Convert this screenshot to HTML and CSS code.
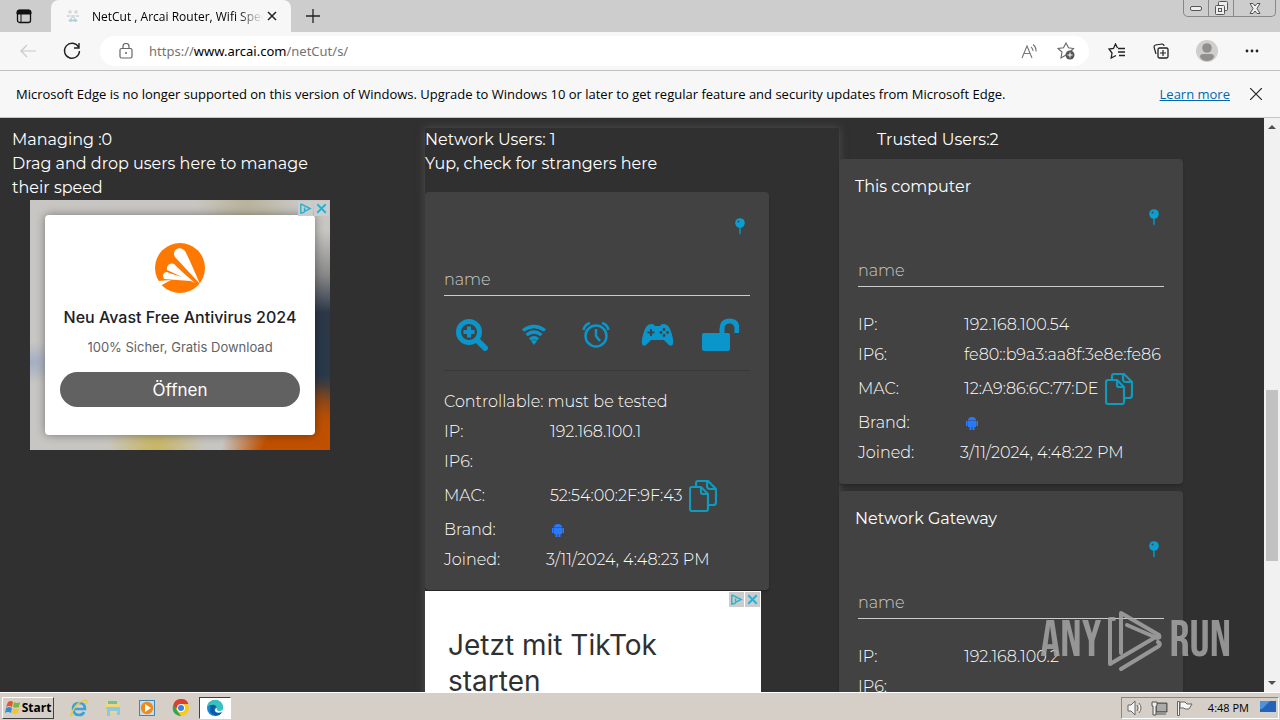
FILE: index.html
```html
<!DOCTYPE html>
<html lang="en">
<head>
<meta charset="utf-8">
<title>NetCut , Arcai Router, Wifi Speed</title>
<link rel="stylesheet" href="styles.css">
</head>
<body>
<svg class="sprite" aria-hidden="true">
  <symbol id="pin" viewBox="0 0 12 18"><path d="M5 9h2v6l-1 2-1-2z" fill="#1482a3"/><circle cx="6" cy="5" r="4.800" fill="#0a9fd0"/><circle cx="4.500" cy="3.500" r="1" fill="#47454c"/></symbol>
  <symbol id="copy" viewBox="0 0 28 32"><g fill="none" stroke="#0f9bbd" stroke-width="2.200" stroke-linejoin="round"><path d="M3 7h9l7 7v15q0 2-2 2H3q-2 0-2-2V9q0-2 2-2zM12 7v5q0 2 2 2h5"/><path d="M7 6V3q0-2 2-2h10l8 8v13q0 3-3 3h-4M18 1v5q0 3 3 3h6"/></g></symbol>
  <symbol id="android" viewBox="0 0 12 14"><path d="M2 4.500Q2 1 6 1t4 3.500zM2 5h8v6H8.500v3h-2v-3h-1v3h-2v-3H2z" fill="#2979ff"/><path d="M0 5h1.600v5H0zM10.400 5H12v5h-1.600z" fill="#2979ff"/></symbol>
  <symbol id="adinfo" viewBox="0 0 16 16"><path d="M3 3v10l4-1M3 3l10 5-6 3V7" fill="none" stroke="#2bb0cf" stroke-width="1.500"/></symbol>
  <symbol id="adclose" viewBox="0 0 16 16"><path d="M3.500 3.500l9 9m0-9l-9 9" fill="none" stroke="#2bb0cf" stroke-width="2"/></symbol>
</svg>

<header class="tabstrip">
  <button class="tabmenu" aria-label="Tab actions"><svg width="16" height="16" viewBox="0 0 16 16"><rect x="1.500" y="2.500" width="13" height="12" rx="2" fill="none" stroke="#111" stroke-width="1.300"/><path d="M1 6V4q0-2 2-2h10q2 0 2 2v2zM5 6v8" stroke="#111" fill="#111"/></svg></button>
  <div class="tab">
    <svg width="14" height="14" viewBox="0 0 14 14"><circle cx="4" cy="3" r="1.800" fill="#d3d9dd"/><circle cx="10" cy="3" r="1.800" fill="#d3d9dd"/><path d="M1 6h3v2H1zM10 6h3v2h-3zM5 6h4v3H5z" fill="#d3d9dd"/><path d="M2 12l3-3 2 2 2-2 3 3-3 1-2-1-2 1z" fill="#b5cedb"/></svg>
    <span class="tab-title">NetCut , Arcai Router, Wifi Spee</span>
    <button aria-label="Close tab"><svg width="10" height="10" viewBox="0 0 10 10"><path d="M1 1l8 8m0-8L1 9" stroke="#222" stroke-width="1.500"/></svg></button>
  </div>
  <button class="newtab" aria-label="New tab"><svg width="14" height="14" viewBox="0 0 14 14"><path d="M7 0v14M0 7h14" stroke="#222" stroke-width="1.300"/></svg></button>
  <div class="winctl">
    <button aria-label="Minimize"><svg width="12" height="6" viewBox="0 0 12 6"><rect x=".5" y="1.500" width="11" height="4" rx="1.500" fill="#eee" stroke="#555"/></svg></button>
    <button aria-label="Restore"><svg width="14" height="14" viewBox="0 0 14 14"><g fill="#eee" stroke="#555"><rect x="4.500" y=".5" width="9" height="9" rx="1"/><rect x="1.500" y="4.500" width="9" height="9" rx="1"/><rect x="4.500" y="7.500" width="3" height="3"/></g></svg></button>
    <button class="winclose" aria-label="Close"><svg width="12" height="11" viewBox="0 0 12 11"><path d="M1 .5h3l2 2.500 2-2.500h3L8 5.500l3 5H8L6 8l-2 2.500H1l3-5z" fill="#eee" stroke="#555"/></svg></button>
  </div>
</header>

<nav class="toolbar">
  <button class="back" aria-label="Back"><svg width="16" height="14" viewBox="0 0 16 14"><path d="M7 1L1 7l6 6M1 7h15" fill="none" stroke="#c8c8c8" stroke-width="1.200"/></svg></button>
  <button class="reload" aria-label="Refresh"><svg width="18" height="18" viewBox="0 0 18 18"><path d="M15.500 5A7.500 7.500 0 1 0 16.500 9M16 1v5h-5" fill="none" stroke="#222" stroke-width="1.400"/></svg></button>
  <div class="address">
    <svg width="14" height="16" viewBox="0 0 14 16"><rect x="1" y="5.500" width="12" height="9.500" rx="1.500" fill="none" stroke="#666" stroke-width="1.200"/><path d="M4 5V3.500a3 3 0 0 1 6 0V5" fill="none" stroke="#666" stroke-width="1.200"/><circle cx="7" cy="10" r="1" fill="#666"/></svg>
    <div class="url">https://<b>www.arcai.com</b>/netCut/s/</div>
    <button aria-label="Read aloud"><svg width="16" height="16" viewBox="0 0 16 16"><path d="M1 15L6 3l5 12M3 10.500h6.500M10 4q2 1.500 2 4M12 1.500q3.500 2.500 3 7" fill="none" stroke="#777" stroke-width="1.100"/></svg></button>
    <button class="fav" aria-label="Add to favorites"><svg width="18" height="18" viewBox="0 0 18 18"><path d="M9 13l-5 3 1-6L1 6.500l5.500-.8L9 1l2.500 4.700 5 .8-3 3" fill="none" stroke="#666" stroke-width="1.100"/><circle cx="13" cy="13" r="4.500" fill="#555"/><path d="M13 10.500v5M10.500 13h5" stroke="#fff"/></svg></button>
  </div>
  <div class="actions">
    <button aria-label="Favorites"><svg width="18" height="16" viewBox="0 0 18 16"><path d="M9.500 5L7.500 1l-2 4.500L1 6l3 4-.8 5L8 12.500M10 5.500h7M10 9h7M11 12.500h6" fill="none" stroke="#222" stroke-width="1.300"/></svg></button>
    <button aria-label="Collections"><svg width="16" height="16" viewBox="0 0 16 16"><rect x="5" y="5" width="10" height="10" rx="1.500" fill="none" stroke="#222" stroke-width="1.300"/><path d="M10 7v6M7 10h6M3 11L1 4q0-1.500 1.500-2L9 1q2 0 2 2" fill="none" stroke="#222" stroke-width="1.200"/></svg></button>
    <button aria-label="Profile"><svg width="22" height="22" viewBox="0 0 22 22"><circle cx="11" cy="11" r="11" fill="#d0cecc"/><circle cx="11" cy="8" r="4.800" fill="#918f8d"/><path d="M4 17q0-3 3-3h8q3 0 3 3-2 4-7 4t-7-4z" fill="#918f8d"/></svg></button>
    <button aria-label="More"><svg width="14" height="4" viewBox="0 0 14 4"><g fill="#222"><circle cx="2" cy="2" r="1.400"/><circle cx="7" cy="2" r="1.400"/><circle cx="12" cy="2" r="1.400"/></g></svg></button>
  </div>
</nav>

<div class="infobar">
  <span>Microsoft Edge is no longer supported on this version of Windows. Upgrade to Windows 10 or later to get regular feature and security updates from Microsoft Edge.</span>
  <a href="#">Learn more</a>
  <button aria-label="Dismiss"><svg width="12" height="12" viewBox="0 0 12 12"><path d="M0 0l12 12M12 0L0 12" stroke="#222" stroke-width="1.200"/></svg></button>
</div>

<div class="view">
  <main class="page">
    <section class="col">
      <p class="head managing">Managing :0<br>Drag and drop users here to manage their speed</p>
      <div class="ad">
        <div class="adtags"><svg width="15" height="15"><use href="#adinfo"/></svg><svg width="15" height="15"><use href="#adclose"/></svg></div>
        <div class="adbox">
          <svg width="50" height="50" viewBox="0 0 50 50"><circle cx="25" cy="25" r="25" fill="#ff7800"/><path d="M20 14C16 7 25 2 30 8q2 3 15 33zM12 27c-1-6 6-9 9-4q5 5 19 17zM9 36c-3-5 2-9 5-6q12 3 22 8-15-1-27-2zM3 38l13-1-11 6z" fill="#fff"/></svg>
          <h3>Neu Avast Free Antivirus 2024</h3>
          <p>100% Sicher, Gratis Download</p>
          <button>Öffnen</button>
        </div>
      </div>
    </section>

    <section class="col network">
      <p class="head">Network Users: 1<br>Yup, check for strangers here</p>
      <article class="card user">
        <div class="pinrow"><svg width="12" height="18"><use href="#pin"/></svg></div>
        <input type="text" placeholder="name" aria-label="User name">
        <div class="tools">
          <button aria-label="Scan"><svg width="34" height="34" viewBox="0 0 34 34"><circle cx="14" cy="14" r="10.500" fill="none" stroke="#0a95cb" stroke-width="5"/><path d="M14 8.500v11M8.500 14h11" stroke="#0a95cb" stroke-width="4"/><path d="M22 22l8 8" stroke="#0a95cb" stroke-width="6" stroke-linecap="round"/></svg></button>
          <button aria-label="Wifi"><svg width="26" height="22" viewBox="0 0 26 22"><g fill="none" stroke="#0a95cb" stroke-width="3.400"><path d="M2 6.500q11-8 22 0"/><path d="M5.500 11q7.500-6 15 0"/><path d="M9 15.500q4-3.500 8 0"/></g><path d="M10 17q3-2 6 0l-3 4z" fill="#0a95cb"/></svg></button>
          <button aria-label="Schedule"><svg width="28" height="28" viewBox="0 0 28 28"><g fill="none" stroke="#0a95cb" stroke-width="2.500"><circle cx="14" cy="15" r="10.500"/><path d="M14 8v7l4 5M1.500 9Q3 3 8 2M26.500 9Q25 3 20 2"/></g></svg></button>
          <button aria-label="Game mode"><svg width="33" height="24" viewBox="0 0 33 24"><path d="M4 6q2-5 7-5 2 0 3 2h5q1-2 3-2 5 0 7 5 4 10 3 15-1 3-4 1l-5-5H10l-5 5q-3 2-4-1Q0 16 4 6z" fill="#0a95cb"/><path d="M10 6v7M6.500 9.500h7" stroke="#424242" stroke-width="2"/><g fill="#424242"><circle cx="23" cy="6.500" r="1.400"/><circle cx="20" cy="9.500" r="1.400"/><circle cx="26.500" cy="9.500" r="1.400"/><circle cx="23" cy="12.500" r="1.400"/></g></svg></button>
          <button class="lock" aria-label="Unlock"><svg width="37" height="34" viewBox="0 0 37 34"><rect y="15" width="28" height="18" rx="2" fill="#0a95cb"/><path d="M20 16v-5q0-8 7.500-8T35 11v4" fill="none" stroke="#0a95cb" stroke-width="5"/></svg></button>
        </div>
        <hr>
        <div class="row">Controllable: must be tested</div>
        <div class="row"><span>IP:</span>192.168.100.1</div>
        <div class="row"><span>IP6:</span></div>
        <div class="row mac"><span>MAC:</span>52:54:00:2F:9F:43<button aria-label="Copy"><svg width="28" height="32"><use href="#copy"/></svg></button></div>
        <div class="row brand"><span>Brand:</span><svg width="12" height="14"><use href="#android"/></svg></div>
        <div class="row joined"><span>Joined:</span>3/11/2024, 4:48:23 PM</div>
      </article>
      <div class="tiktok">
        <div class="adtags"><svg width="15" height="15"><use href="#adinfo"/></svg><svg width="15" height="15"><use href="#adclose"/></svg></div>
        <h2>Jetzt mit TikTok starten</h2>
      </div>
    </section>

    <section class="col trusted">
      <p class="head">Trusted Users:2</p>
      <article class="card">
        <h4>This computer</h4>
        <div class="pinrow"><svg width="12" height="18"><use href="#pin"/></svg></div>
        <input type="text" placeholder="name" aria-label="Computer name">
        <div class="row"><span>IP:</span>192.168.100.54</div>
        <div class="row"><span>IP6:</span>fe80::b9a3:aa8f:3e8e:fe86</div>
        <div class="row mac"><span>MAC:</span>12:A9:86:6C:77:DE<button aria-label="Copy"><svg width="28" height="32"><use href="#copy"/></svg></button></div>
        <div class="row brand"><span>Brand:</span><svg width="12" height="14"><use href="#android"/></svg></div>
        <div class="row joined"><span>Joined:</span>3/11/2024, 4:48:22 PM</div>
      </article>
      <article class="card">
        <h4>Network Gateway</h4>
        <div class="pinrow"><svg width="12" height="18"><use href="#pin"/></svg></div>
        <input type="text" placeholder="name" aria-label="Gateway name">
        <div class="row"><span>IP:</span>192.168.100.2</div>
        <div class="row"><span>IP6:</span></div>
      </article>
    </section>
  </main>
  <div class="scrollbar">
    <svg width="16" height="17" viewBox="0 0 16 17"><path d="M4 11l4-4 4 4z" fill="#505050"/></svg>
    <div class="track"><div class="thumb"></div></div>
    <svg width="16" height="17" viewBox="0 0 16 17"><path d="M4 6l4 4 4-4z" fill="#505050"/></svg>
  </div>
  <div class="watermark">
    <span>ANY</span>
    <svg width="56" height="62" viewBox="0 0 56 62"><g fill="none" stroke="#a5a5a5" stroke-width="4" stroke-linejoin="round" stroke-linecap="round"><path d="M14 43V3l38 22q2 3-2 3L20 15"/><path d="M7 9H3v45l44-26"/><path d="M14 59l38-23q2-3-1-4"/></g></svg>
    <span>RUN</span>
  </div>
</div>

<footer class="taskbar">
  <button class="start"><svg width="16" height="15" viewBox="0 0 16 15"><path d="M3 2q3-2 5 0L7 7Q4 5 1 7z" fill="#e2572b"/><path d="M9 2q3 2 6 0l-1 5q-4 1-6 0z" fill="#75b843"/><path d="M1 8q3-2 6 0l-1 5q-3-2-6 0z" fill="#338bd3"/><path d="M8 8q3 2 6 0l-1 5q-3 2-6 0z" fill="#f7c42f"/></svg>Start</button>
  <button aria-label="Internet Explorer"><svg width="18" height="18" viewBox="0 0 18 18"><path d="M4 10h11q0-6-6-6t-6 6q1 6 6 6 4 0 5-3" fill="none" stroke="#35a5df" stroke-width="2.600"/><path d="M3 15q-4 4-1-2Q8 2 15 1q3 0 1 4" fill="none" stroke="#eec648" stroke-width="1.600"/></svg></button>
  <button aria-label="Explorer"><svg width="18" height="18" viewBox="0 0 18 18"><path d="M2 3h5l1 2h8v9H2z" fill="#eed77d"/><path d="M4 2h9v3H4z" fill="#77c18b"/><path d="M2 8h14v8h-3v-4H6v5H3v-5z" fill="#8bc7e8"/></svg></button>
  <button aria-label="Media Player"><svg width="18" height="18" viewBox="0 0 18 18"><rect x="1.500" y="1.500" width="15" height="15" fill="#c2def1" stroke="#4285b9"/><circle cx="9" cy="9" r="6.200" fill="#f18919"/><path d="M7 5l6 4-6 4z" fill="#fff"/></svg></button>
  <button aria-label="Chrome"><svg width="18" height="18" viewBox="0 0 18 18"><circle cx="9" cy="9" r="8" fill="#f9c91c"/><path d="M9 9H1.500l-.4-2A8 8 0 0 1 16.500 5H9z" fill="#dc4032"/><path d="M1.500 5.500L6 13l3 4A8 8 0 0 1 1.500 5.500z" fill="#35a355"/><circle cx="9" cy="9" r="4" fill="#fff"/><circle cx="9" cy="9" r="3" fill="#3d7de5"/></svg></button>
  <button class="active" aria-label="Edge"><svg width="18" height="18" viewBox="0 0 18 18"><circle cx="9" cy="9" r="8" fill="#1688d3"/><path d="M1 8Q3 1 9 1q7 0 8 7 0 4-5 4-2 0-1-2 0-4-4-4-4 0-6 2z" fill="#37c3bd"/><path d="M3 7q6-3 7 1-3 1-1 5 3 2 7 0-3 5-8 3-6-3-3-8z" fill="#0c59a4"/><path d="M11 9q-1 3 2 3 3 0 4-2l-1 3q-5 2-7-1 0-3 2-3z" fill="#fff"/></svg></button>
  <div class="tray">
    <svg width="16" height="16" viewBox="0 0 16 16"><path d="M1 5h3l4-4v14l-4-4H1zM10 5q2 3 0 6M12 3q4 5 0 10" fill="#f5f5f5" stroke="#666"/></svg>
    <svg width="17" height="16" viewBox="0 0 17 16"><path d="M5 3h11v9H5zM3 14h12" fill="#777" stroke="#555"/><path d="M6 4h9v7H6z" fill="#aaa"/><path d="M1 2h5v4H5v9H2V6H1z" fill="#eee" stroke="#555"/></svg>
    <svg width="17" height="16" viewBox="0 0 17 16"><path d="M1.500 1.500h2v14h-2zM4 2h5l2 2h5l-3 5H9L8 8H4z" fill="#f5f5f5" stroke="#666"/></svg>
    <time>4:48 PM</time>
    <svg width="16" height="13" viewBox="0 0 16 13"><rect width="16" height="11" fill="#2463b7"/><path d="M0 0h10L2 8H0z" fill="#4e91dc"/><path d="M5 11h6v2H5z" fill="#bcd5ee"/></svg>
  </div>
</footer>
</body>
</html>
```

FILE: styles.css
```css
* { box-sizing: border-box; }
body {
  margin: 0;
  height: 100vh;
  display: flex;
  flex-direction: column;
  overflow: hidden;
  font-family: "Open Sans", "Noto Sans", sans-serif;
  font-size: 12px;
  color: #000;
  background: #303030;
}
button { border: 0; padding: 0; background: none; display: flex; align-items: center; justify-content: center; font: inherit; color: inherit; flex: none; }
svg { flex: none; display: block; }
p, h2, h3, h4 { margin: 0; font-weight: 400; }
.sprite { position: absolute; width: 0; height: 0; }

.tabstrip { display: flex; height: 32px; background: #cdcdcd; flex: none; }
.tabmenu { width: 48px; }
.tab { width: 240px; margin-left: 3px; padding: 0 14px 0 15px; display: flex; align-items: center; background: #f7f7f7; border-radius: 8px 8px 0 0; }
.tab-title { flex: 1; margin: 0 4px 0 12px; overflow: hidden; white-space: nowrap; mask-image: linear-gradient(90deg, #000 85%, transparent); }
.newtab { width: 44px; }
.winctl { margin-left: auto; margin-right: 4px; height: 17px; display: flex; border: 1px solid #888; border-top: 0; border-radius: 0 0 5px 5px; }
.winctl button { width: 25px; border-right: 1px solid #888; }
.winctl .winclose { width: 41px; border: 0; }

.toolbar { display: flex; align-items: center; height: 39px; flex: none; background: #f7f7f7; border-bottom: 1px solid #c0c0c0; }
.back { width: 56px; }
.reload { width: 32px; }
.address { flex: 1; height: 30px; margin-left: 12px; padding: 0 14px 0 19px; display: flex; align-items: center; background: #fff; border-radius: 15px; }
.url { flex: 1; margin-left: 16px; font-family: "Noto Sans", sans-serif; font-size: 13px; color: #737373; }
.url b { font-weight: 400; color: #000; }
.fav { margin-left: 20px; }
.actions { display: flex; align-items: center; gap: 27px; margin: 0 21px 0 19px; }

.infobar { display: flex; align-items: center; height: 47px; flex: none; padding: 0 18px 0 16px; background: #f7f7f7; border-bottom: 1px solid #c4c4c4; white-space: nowrap; font-size: 13px; }
.infobar a { margin-left: auto; margin-right: 20px; color: #0067b0; }

.view { position: relative; flex: 1; min-height: 0; display: flex; overflow: hidden; }
.page { flex: 1; display: grid; grid-template-columns: repeat(3, 1fr); padding: 10px 11px 0; color: #fff; font-family: Montserrat, Inter, sans-serif; font-size: 16px; font-weight: 300; line-height: 24px; overflow: hidden; }
.network { box-shadow: 0 0 8px #505050; }
.managing { max-width: 320px; padding-left: 1px; }
.card { width: 344px; padding: 0 19px 15px; background: #424242; border-radius: 4px; box-shadow: 0 2px 2px #2228; }
.trusted .card { margin-bottom: 7px; padding-bottom: 16px; }
.trusted .head { padding: 0 38px 7px; }
.user { margin-top: 16px; padding-top: 26px; }
.card h4 { margin: 0 -3px; padding: 16px 0 0; }
.pinrow { display: flex; justify-content: flex-end; height: 40px; padding-right: 4px; }
.trusted .pinrow { height: 50px; padding-top: 10px; }
.card input { width: 100%; height: 38px; padding: 5px 0 0; border: 0; border-bottom: 1px solid #ccc; background: none; color: #fff; font: inherit; outline: 0; display: block; }
.card input::placeholder { color: #cacaca; opacity: 1; }
.trusted .card input { margin-bottom: 23px; }
.tools { display: flex; align-items: center; justify-content: space-between; height: 74px; padding: 4px 11px 0; }
.tools button { width: 34px; }
.tools .lock { width: 37px; }
.card hr { margin: 0 0 16px; border: 0; border-top: 1px solid #383838; }
.row { display: flex; align-items: center; height: 30px; white-space: nowrap; }
.row span { width: 106px; flex: none; }
.mac { height: 38px; }
.mac button { margin-left: 7px; }
.brand svg { margin-left: 2px; }
.joined span { width: 102px; }

.ad { position: relative; width: 300px; margin-left: 19px; padding: 15px; background:
  radial-gradient(circle at 90% 105%, #c05000 0 40px, transparent 80px),
  radial-gradient(ellipse at 42% 102%, #c9b45c 0, transparent 50px),
  radial-gradient(ellipse at 0 65%, #a3aec4 0, transparent 40px),
  radial-gradient(ellipse at 72% 0, #b8b298 0, transparent 50px),
  linear-gradient(#c8c6c2 12%, #888 30%, #2c3848 45%, #28394a 70%, #b44c04 90%) right / 15px 100% no-repeat,
  #c8c6c2; }
.adtags { position: absolute; top: 1px; right: 1px; display: flex; gap: 1px; }
.adtags svg { background: #ccc; }
.adbox { height: 220px; padding: 28px 15px 0; display: flex; flex-direction: column; align-items: center; background: #fff; border-radius: 4px; box-shadow: 0 0 10px #0006; font-family: Inter, sans-serif; color: #5f6368; font-size: 13px; font-weight: 400; white-space: nowrap; }
.adbox h3 { margin: 12px 0 6px; font-size: 16px; font-weight: 500; color: #202124; }
.adbox button { width: 100%; height: 35px; margin-top: 13px; background: #616161; color: #fff; border-radius: 18px; font-size: 17px; }
.tiktok { position: relative; width: 336px; margin-top: 1px; padding: 36px 23px 20px; background: #fff; color: #303030; }
.tiktok h2 { width: 240px; font: 400 28px/36px Inter, sans-serif; }

.scrollbar { width: 16px; flex: none; display: flex; flex-direction: column; background: #f1f1f1; }
.track { flex: 1; display: flex; flex-direction: column; padding: 255px 2px 0; }
.thumb { height: 171px; background: #c1c1c1; }
.watermark { position: absolute; right: 49px; bottom: 20px; display: flex; align-items: center; gap: 6px; color: #a5a5a5; font: 50px/62px "Bebas Neue", Oswald, "Roboto Condensed", "Liberation Sans Narrow", sans-serif; opacity: .85; }

.taskbar { display: flex; align-items: center; height: 28px; flex: none; padding: 2px 1px 0 2px; gap: 2px; background: #d6cfc8; border-top: 1px solid #fff; }
.taskbar button { width: 32px; height: 22px; }
.taskbar .start { width: 52px; gap: 1px; margin-right: 7px; font-weight: 700; border: 1px solid #fff; border-right-color: #404040; border-bottom-color: #404040; }
.taskbar .active { background: #fff; border: 1px solid #404040; border-right-color: #fff; border-bottom-color: #fff; }
.tray { margin-left: auto; height: 22px; display: flex; align-items: center; gap: 8px; padding: 0 2px 0 5px; border: 1px solid #888; border-right-color: #fff; border-bottom-color: #fff; }
.tray time { margin: 0 3px 0 7px; font-size: 11px; }
```
